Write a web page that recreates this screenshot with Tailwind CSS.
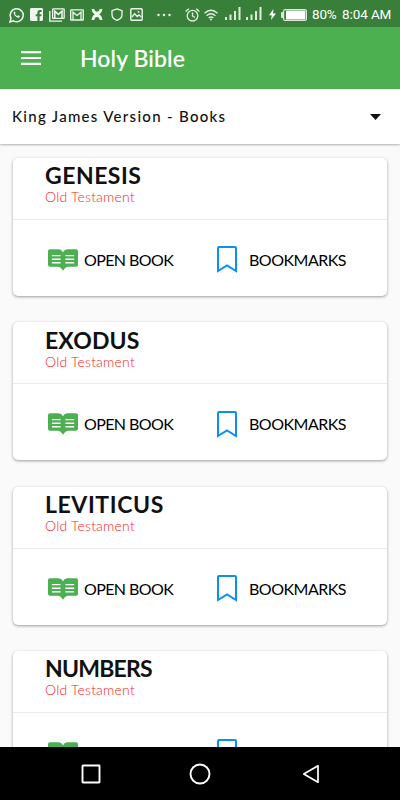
<!DOCTYPE html>
<html lang="en">
<head>
    <meta charset="UTF-8">
    <meta name="viewport" content="width=device-width, initial-scale=1.0">
    <title>Holy Bible</title>
    <script src="https://cdn.jsdelivr.net/npm/@tailwindcss/browser@4"></script>
</head>
<body onload="loadBooks()" class="h-[800px] overflow-hidden flex flex-col bg-[#fafafa] font-['Lato',sans-serif]">
    <!-- Status Bar -->
    <div class="flex items-center shrink-0 h-[27px] pl-[9px] pt-[2px] bg-[#388039] text-white">
        <svg class="w-[15px] h-[16px] shrink-0 mr-[6px]" viewBox="0 0 15 16" fill="none" stroke="#f1f6f1" stroke-width="1.5">
            <path d="M1 15l1-3.7A6.5 6.5 0 1 1 4.4 13.8z"/>
            <path d="M5.3 4.3c-1.8 1.6.8 6 4.4 6.5l1.3-1.5-1.7-1-1 .8C7 8.500 6.300 7.600 6 6.700l.6-.8z" fill="#f1f6f1" stroke="none"/>
        </svg>
        <svg class="w-[13px] h-[13px] shrink-0 mr-[6px]" viewBox="0 0 13 13">
            <path fill="#f1f6f1" fill-rule="evenodd" d="M1 0h11l1 1v11l-1 1H9.600V8.200h1.700l.3-2H9.600V4.800q0-.8 1-.8h1V2.100H9.900Q7.400 2.100 7.400 4.500v1.700H5.700v2h1.700V13H1l-1-1V1z"/>
        </svg>
        <svg class="w-[16px] h-[14px] shrink-0 mr-[5px]" viewBox="0 0 16 14" fill="none" stroke="#f1f6f1">
            <path d="M.8 3v10.200H13" stroke-width="1.300"/>
            <rect x="3.600" y=".8" width="11.600" height="9.600" rx=".6" stroke-width="1.300"/>
            <path d="M5.800 10V3.200l3.600 3.200L13 3.200V10" stroke-width="1.500"/>
        </svg>
        <svg class="w-[14px] h-[12px] shrink-0 mr-[7px]" viewBox="0 0 14 12" fill="none" stroke="#f1f6f1">
            <rect x=".7" y=".8" width="12.600" height="10.200" rx=".6" stroke-width="1.300"/>
            <path d="M3 10.500V3.200L7 6.500l4-3.300v7.300" stroke-width="1.300"/>
        </svg>
        <svg class="w-[12px] h-[11px] shrink-0 mr-[8px]" viewBox="0 0 12 11">
            <path fill="#f1f6f1" d="M.5 0h2.800q.4 2.800 2.700 2.800T8.700 0h2.800Q11 4 8.300 5.400 11 6.800 11.500 11H8.700Q8.300 8 6 8t-2.700 3H.5Q1 6.800 3.700 5.400 1 4 .5 0z"/>
        </svg>
        <svg class="w-[12px] h-[13px] shrink-0 mr-[7px]" viewBox="0 0 12 13" fill="none" stroke="#f1f6f1" stroke-width="1.300">
            <path d="M6 .9l5 1.700v3.800c0 2.900-2.500 5-5 5.900-2.500-.9-5-3-5-5.900V2.600z"/>
        </svg>
        <svg class="w-[13px] h-[13px] shrink-0 mr-[14px]" viewBox="0 0 13 13">
            <rect x=".8" y=".8" width="11.400" height="11.400" rx="1" fill="none" stroke="#f1f6f1" stroke-width="1.400"/>
            <path fill="none" stroke="#f1f6f1" stroke-width="1.300" d="M2 9l2.600-3.300 2.700 2.800 1.700-1.700L11.300 9"/>
            <circle cx="8.500" cy="3.900" r=".9" fill="#f1f6f1"/>
        </svg>
        <svg class="w-[14px] h-[4px] shrink-0 mr-[14px]" viewBox="0 0 14 4" fill="#f1f6f1">
            <circle cx="1.500" cy="2" r="1.200"/><circle cx="7" cy="2" r="1.200"/><circle cx="12.500" cy="2" r="1.200"/>
        </svg>
        <svg class="w-[15px] h-[14px] shrink-0 mr-[4px]" viewBox="0 0 15 14" fill="none" stroke="#e5efe5" stroke-width="1.300">
            <circle cx="7.500" cy="7.700" r="5.300"/>
            <path d="M7.500 4.500v3.500l2.500 1.500M.6 3.500L3.800.7M14.400 3.500L11.200.7"/>
        </svg>
        <svg class="w-[14px] h-[12px] shrink-0 mr-[7px]" viewBox="0 0 14 12" fill="none" stroke="#e5efe5" stroke-width="1.300">
            <path d="M.5 4.200q6.500-6 13 0M2.600 6.700q4.400-4 8.800 0M4.700 9q2.300-2 4.600 0"/>
            <circle cx="7" cy="10.600" r="1" fill="#e5efe5" stroke="none"/>
        </svg>
        <svg class="w-[16px] h-[13px] shrink-0 mr-[5px] -mt-[2px]" viewBox="0 0 16 13" fill="#e0ebe0">
            <path d="M0 10h2v3H0zM4.500 7.500h2V13h-2zM9 4h2v9H9zM13.500 0h2v13h-2z"/>
        </svg>
        <svg class="w-[16px] h-[13px] shrink-0 mr-[7px] -mt-[2px]" viewBox="0 0 16 13" fill="#e0ebe0">
            <path d="M0 10h2v3H0zM4.500 7.500h2V13h-2zM9 4h2v9H9zM13.500 0h2v13h-2z"/>
        </svg>
        <svg class="w-[7px] h-[11px] shrink-0 mr-[5px]" viewBox="0 0 7 11" fill="#fff">
            <path d="M4.500 0L0 6.200h2.800L2 11l5-6.500H4z"/>
        </svg>
        <svg class="w-[26px] h-[12px] shrink-0 mr-[5px]" viewBox="0 0 26 12">
            <rect y="3" width="3" height="6" rx="1" fill="#dce8dc"/>
            <rect x="2.600" y=".6" width="22.800" height="10.800" rx="1.500" fill="none" stroke="#dce8dc" stroke-width="1.200"/>
            <rect x="5" y="1.600" width="19.300" height="8.800" fill="#fff"/>
        </svg>
        <span class="w-[30px] shrink-0 whitespace-nowrap font-['Roboto',sans-serif] text-[13.5px] leading-none tracking-[-0.2px] mt-[1px]">80%</span>
        <span class="shrink-0 whitespace-nowrap font-['Roboto',sans-serif] text-[13.5px] leading-none tracking-[-0.1px] mt-[1px]">8:04 AM</span>
    </div>

    <!-- App Bar -->
    <div class="flex items-center shrink-0 h-[62px] pl-[21px] bg-[#4caf50] text-white">
        <svg class="w-[20px] h-[14px] mr-[39px]" viewBox="0 0 20 14" fill="#fff">
            <path d="M0 0h20v2.200H0zM0 5.900h20v2.200H0zM0 11.800h20V14H0z"/>
        </svg>
        <h1 class="text-[23px] leading-none font-medium tracking-[0.1px] [-webkit-text-stroke:0.15px_#fff]">Holy Bible</h1>
    </div>

    <!-- Version Select -->
    <div class="flex items-center justify-between shrink-0 h-[55px] pl-[12px] pr-[19px] bg-white shadow-[0_1px_2px_rgba(0,0,0,0.3)]">
        <span class="text-[15px] leading-none font-medium tracking-[1.3px] text-[#111]">King James Version - Books</span>
        <svg class="w-[11px] h-[6px] mt-[1px]" viewBox="0 0 11 6" fill="#111"><path d="M0 0h11L5.500 6z"/></svg>
    </div>

    <!-- Book Cards -->
    <div id="bookContainer" class="flex-1 min-h-0 overflow-hidden flex flex-col gap-[26.4px] px-[13px] pt-[13.8px]"></div>

    <!-- Navigation Bar -->
    <div class="flex items-center shrink-0 h-[53px] pl-[81px] bg-black">
        <svg class="w-[20px] h-[20px] mr-[88px]" viewBox="0 0 20 20" fill="none" stroke="#fff" stroke-width="1.900"><rect x="1.500" y="1.500" width="17" height="17" rx=".5"/></svg>
        <svg class="w-[22px] h-[22px] mr-[91px]" viewBox="0 0 22 22" fill="none" stroke="#fff" stroke-width="1.900"><circle cx="11" cy="11" r="9.500"/></svg>
        <svg class="w-[18px] h-[20px]" viewBox="0 0 18 20" fill="none" stroke="#fff" stroke-width="1.700" stroke-linejoin="round"><path d="M16 1.800v16.400L1.800 10z"/></svg>
    </div>

    <script>
        const books = [
            { name: "GENESIS", testament: "Old Testament", spacing: "0.5px" },
            { name: "EXODUS", testament: "Old Testament", spacing: "0.1px" },
            { name: "LEVITICUS", testament: "Old Testament", spacing: "0.6px" },
            { name: "NUMBERS", testament: "Old Testament", spacing: "-0.8px" }
        ];

        function loadBooks() {
            let bookContainer = document.getElementById("bookContainer");

            books.forEach((book) => {
                let card = document.createElement("div");
                card.className = "shrink-0 h-[138px] flex flex-col rounded-[5px] bg-white shadow-[0_1px_3px_rgba(0,0,0,0.38)]";

                card.innerHTML = `
                    <div class="h-[62px] pl-[32px] pt-[5.500px] border-b border-[#ebebeb]">
                        <h2 class="text-[23px] leading-[24px] font-bold text-[#111]" style="letter-spacing: ${book.spacing}">${book.name}</h2>
                        <p class="mt-[2px] text-[14px] leading-[16px] font-light tracking-[0.2px] text-[#f91d1d]">${book.testament}</p>
                    </div>
                    <div class="flex-1 flex items-center pl-[35px]">
                        <svg class="w-[30px] h-[22px] mt-[4px] mr-[6px]" viewBox="0 0 31 22">
                            <path fill="#4caf50" d="M2 0h9q3 0 4.500 3Q17 0 20 0h9q2 0 2 2v14q0 2-2 2h-8q-3 0-5.500 4-2.500-4-5.500-4H2q-2 0-2-2V2q0-2 2-2z"/>
                            <path stroke="#fff" stroke-width="1.500" d="M4 6.500h9M4 10.200h9M4 13.800h9M18 6.500h9M18 10.200h9M18 13.800h9"/>
                        </svg>
                        <span class="w-[133px] mt-[4px] text-[16px] leading-none tracking-[-0.6px] text-black">OPEN BOOK</span>
                        <svg class="w-[20px] h-[27px] mt-[4px] mr-[12px]" viewBox="0 0 20 27" fill="none" stroke="#0d8ff2" stroke-width="2">
                            <path d="M2 1h16q1 0 1 1v23l-9-5.500L1 25V2q0-1 1-1z"/>
                        </svg>
                        <span class="mt-[4px] text-[16px] leading-none tracking-[-0.5px] text-black">BOOKMARKS</span>
                    </div>
                `;

                bookContainer.appendChild(card);
            });
        }
    </script>
</body>
</html>
